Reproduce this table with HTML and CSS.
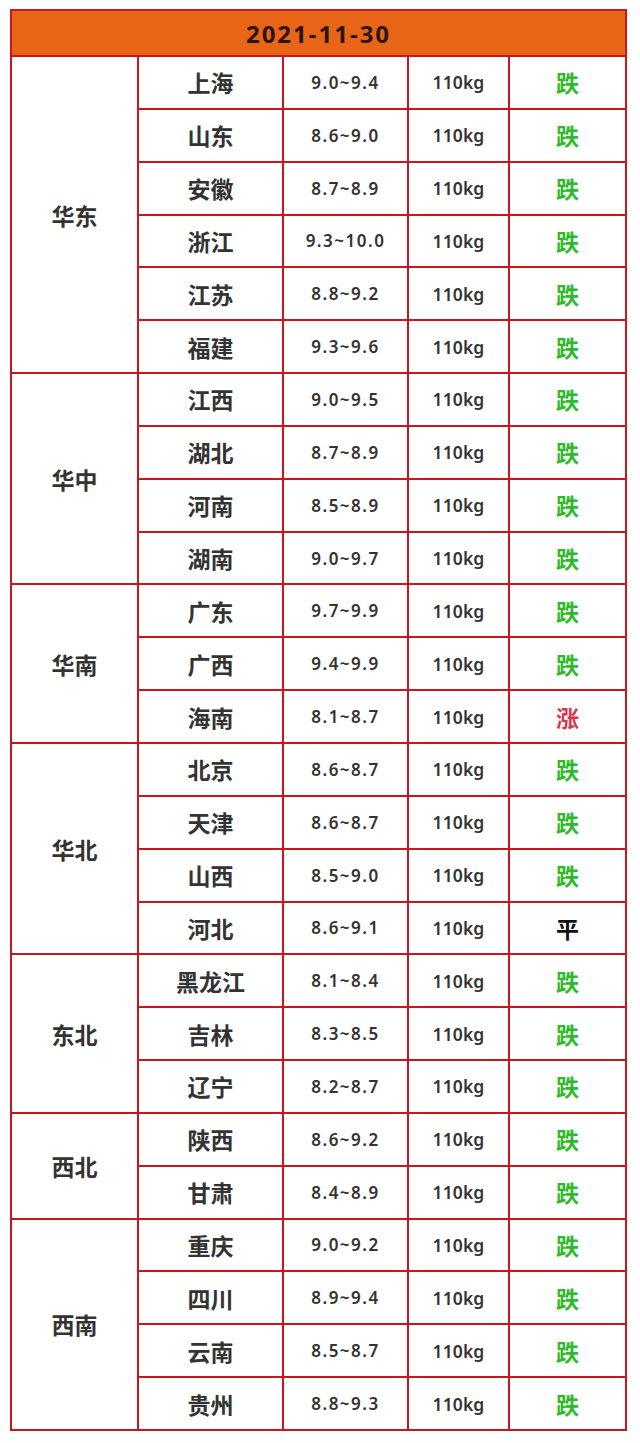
FILE: index.html
```html
<!DOCTYPE html>
<html lang="zh">
<head>
<meta charset="utf-8">
<link rel="stylesheet" href="styles.css">
</head>
<body>
<div class="sheet">
  <div class="title">2021-11-30</div>
  <div class="grid">
    <div class="region" style="grid-row: span 6">华东</div>
    <div class="city">上海</div><div class="range">9.0~9.4</div><div class="weight">110kg</div><div class="trend down">跌</div>
    <div class="city">山东</div><div class="range">8.6~9.0</div><div class="weight">110kg</div><div class="trend down">跌</div>
    <div class="city">安徽</div><div class="range">8.7~8.9</div><div class="weight">110kg</div><div class="trend down">跌</div>
    <div class="city">浙江</div><div class="range">9.3~10.0</div><div class="weight">110kg</div><div class="trend down">跌</div>
    <div class="city">江苏</div><div class="range">8.8~9.2</div><div class="weight">110kg</div><div class="trend down">跌</div>
    <div class="city">福建</div><div class="range">9.3~9.6</div><div class="weight">110kg</div><div class="trend down">跌</div>

    <div class="region" style="grid-row: span 4">华中</div>
    <div class="city">江西</div><div class="range">9.0~9.5</div><div class="weight">110kg</div><div class="trend down">跌</div>
    <div class="city">湖北</div><div class="range">8.7~8.9</div><div class="weight">110kg</div><div class="trend down">跌</div>
    <div class="city">河南</div><div class="range">8.5~8.9</div><div class="weight">110kg</div><div class="trend down">跌</div>
    <div class="city">湖南</div><div class="range">9.0~9.7</div><div class="weight">110kg</div><div class="trend down">跌</div>

    <div class="region" style="grid-row: span 3">华南</div>
    <div class="city">广东</div><div class="range">9.7~9.9</div><div class="weight">110kg</div><div class="trend down">跌</div>
    <div class="city">广西</div><div class="range">9.4~9.9</div><div class="weight">110kg</div><div class="trend down">跌</div>
    <div class="city">海南</div><div class="range">8.1~8.7</div><div class="weight">110kg</div><div class="trend up">涨</div>

    <div class="region" style="grid-row: span 4">华北</div>
    <div class="city">北京</div><div class="range">8.6~8.7</div><div class="weight">110kg</div><div class="trend down">跌</div>
    <div class="city">天津</div><div class="range">8.6~8.7</div><div class="weight">110kg</div><div class="trend down">跌</div>
    <div class="city">山西</div><div class="range">8.5~9.0</div><div class="weight">110kg</div><div class="trend down">跌</div>
    <div class="city">河北</div><div class="range">8.6~9.1</div><div class="weight">110kg</div><div class="trend flat">平</div>

    <div class="region" style="grid-row: span 3">东北</div>
    <div class="city">黑龙江</div><div class="range">8.1~8.4</div><div class="weight">110kg</div><div class="trend down">跌</div>
    <div class="city">吉林</div><div class="range">8.3~8.5</div><div class="weight">110kg</div><div class="trend down">跌</div>
    <div class="city">辽宁</div><div class="range">8.2~8.7</div><div class="weight">110kg</div><div class="trend down">跌</div>

    <div class="region" style="grid-row: span 2">西北</div>
    <div class="city">陕西</div><div class="range">8.6~9.2</div><div class="weight">110kg</div><div class="trend down">跌</div>
    <div class="city">甘肃</div><div class="range">8.4~8.9</div><div class="weight">110kg</div><div class="trend down">跌</div>

    <div class="region" style="grid-row: span 4">西南</div>
    <div class="city">重庆</div><div class="range">9.0~9.2</div><div class="weight">110kg</div><div class="trend down">跌</div>
    <div class="city">四川</div><div class="range">8.9~9.4</div><div class="weight">110kg</div><div class="trend down">跌</div>
    <div class="city">云南</div><div class="range">8.5~8.7</div><div class="weight">110kg</div><div class="trend down">跌</div>
    <div class="city">贵州</div><div class="range">8.8~9.3</div><div class="weight">110kg</div><div class="trend down">跌</div>
  </div>
</div>
</body>
</html>
```
FILE: styles.css
```css
html, body {
  margin: 0;
  padding: 0;
  background: #ffffff;
}
body {
  font-family: "Noto Sans CJK SC", "Noto Sans", sans-serif;
  color: #333333;
}
.sheet {
  margin: 9px 0 0 10px;
  width: 617px;
  box-sizing: border-box;
  border: 2px solid #c8161e;
  background: #c8161e;
}
.title {
  height: 44px;
  background: #e86417;
  color: #2a1608;
  font-family: "Noto Sans", "Noto Sans CJK SC", sans-serif;
  font-weight: 700;
  font-size: 24px;
  display: flex;
  align-items: center;
  justify-content: center;
  letter-spacing: 2px;
}
.grid {
  margin-top: 2px;
  display: grid;
  grid-template-columns: 125px 143px 123px 99px 115px;
  grid-auto-rows: 50.85px;
  gap: 2px;
}
.grid > div {
  background: #ffffff;
  display: flex;
  align-items: center;
  justify-content: center;
}
.region, .city {
  font-size: 23px;
  font-weight: 700;
  color: #333333;
}
.range, .weight {
  font-family: "Noto Sans", sans-serif;
  font-size: 17px;
  font-weight: 600;
  color: #333333;
}
.range {
  letter-spacing: 1.5px;
}
.weight {
  font-size: 17.5px;
  letter-spacing: 0.1px;
}
.trend {
  font-size: 23px;
  font-weight: 700;
}
.trend.down { color: #2dbb2a; }
.trend.up { color: #d8364c; }
.trend.flat { color: #111111; }
```
